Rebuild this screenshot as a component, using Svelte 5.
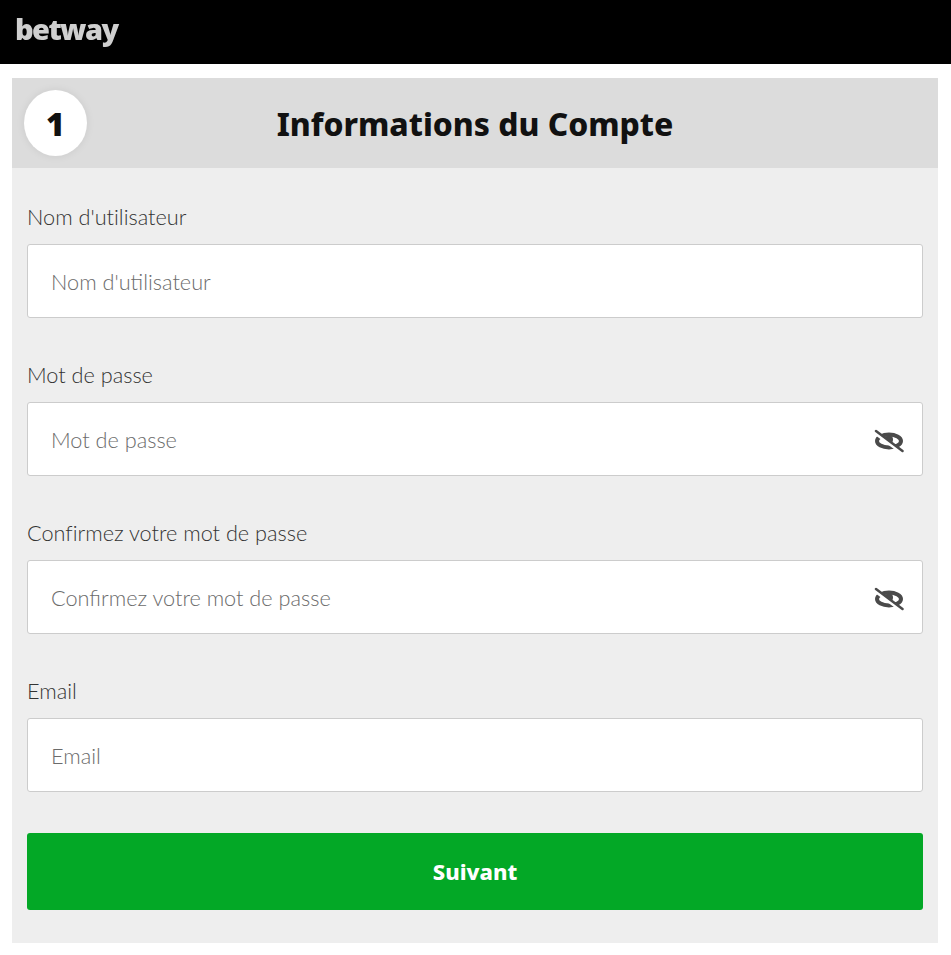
<script lang="ts">
  const fields = [
    { label: "Nom d'utilisateur", type: 'text', eye: false },
    { label: 'Mot de passe', type: 'password', eye: true },
    { label: 'Confirmez votre mot de passe', type: 'password', eye: true },
    { label: 'Email', type: 'email', eye: false }
  ];
</script>

<header class="topbar">
  <span class="logo">betway</span>
</header>

<main class="panel">
  <div class="panel-head">
    <span class="step">1</span>
    <h1>Informations du Compte</h1>
  </div>

  <form class="form">
    {#each fields as field}
      <div class="field">
        <label for={field.label}>{field.label}</label>
        <div class="input-wrap">
          <input id={field.label} type={field.type} placeholder={field.label} />
          {#if field.eye}
            <svg class="eye" viewBox="0 0 30 26" width="30" height="26" aria-hidden="true">
              <ellipse cx="15" cy="14" rx="12" ry="6.500" fill="#fff" stroke="#4a4a4a" stroke-width="4" />
              <circle cx="15" cy="12.500" r="4" fill="#4a4a4a" />
              <path d="M1.500 6 L28 25.500" stroke="#fff" stroke-width="4" />
              <path d="M2 4 L28.500 24" stroke="#4a4a4a" stroke-width="2.500" stroke-linecap="round" />
            </svg>
          {/if}
        </div>
      </div>
    {/each}

    <button type="button" class="next">Suivant</button>
  </form>
</main>

<style>
  :global(body) {
    background: #fff;
    font-family: Lato, 'Noto Sans', sans-serif;
    font-variant-ligatures: none;
  }

  .topbar {
    height: 64px;
    background: #000;
    padding-left: 15px;
    box-sizing: border-box;
  }

  .logo {
    display: block;
    font-family: 'Open Sans', sans-serif;
    font-weight: 800;
    font-size: 29px;
    line-height: 57px;
    letter-spacing: -1.6px;
    color: #cfcfcf;
    filter: blur(0.4px);
  }

  .panel {
    margin: 14px 13px 12px 12px;
    background: #eee;
  }

  .panel-head {
    position: relative;
    height: 90px;
    background: #dcdcdc;
    display: flex;
    align-items: center;
    justify-content: center;
  }

  .step {
    position: absolute;
    left: 12px;
    top: 12px;
    width: 63px;
    height: 66px;
    border-radius: 50%;
    background: #fff;
    box-shadow: 0 0 8px rgba(0, 0, 0, 0.08);
    display: flex;
    align-items: center;
    justify-content: center;
    font-family: 'Noto Sans', sans-serif;
    font-size: 32px;
    font-weight: 900;
    color: #111;
  }

  h1 {
    margin: 0;
    font-family: 'Noto Sans', sans-serif;
    font-size: 31.800px;
    font-weight: 800;
    color: #111;
  }

  .form {
    padding: 35px 15px 33px;
    display: flex;
    flex-direction: column;
  }

  .field + .field {
    margin-top: 43px;
  }

  label {
    display: block;
    height: 41px;
    font-size: 21.700px;
    font-weight: 300;
    line-height: 28px;
    color: #333;
  }

  .input-wrap {
    position: relative;
  }

  input {
    display: block;
    width: 100%;
    height: 74px;
    box-sizing: border-box;
    padding: 1px 23px 0;
    background: #fff;
    border: 1px solid #ccc;
    border-radius: 3px;
    font-family: inherit;
    font-size: 21.700px;
    font-weight: 300;
    color: #333;
    outline: none;
  }

  input::placeholder {
    color: #6b6b6b;
    opacity: 1;
  }

  .eye {
    position: absolute;
    right: 19px;
    top: 25px;
  }

  .next {
    height: 77px;
    margin-top: 41px;
    padding-bottom: 3px;
    border: 0;
    border-radius: 3px;
    background: #03a826;
    color: #fff;
    font-family: 'Noto Sans', sans-serif;
    font-size: 22px;
    font-weight: 800;
  }
</style>
